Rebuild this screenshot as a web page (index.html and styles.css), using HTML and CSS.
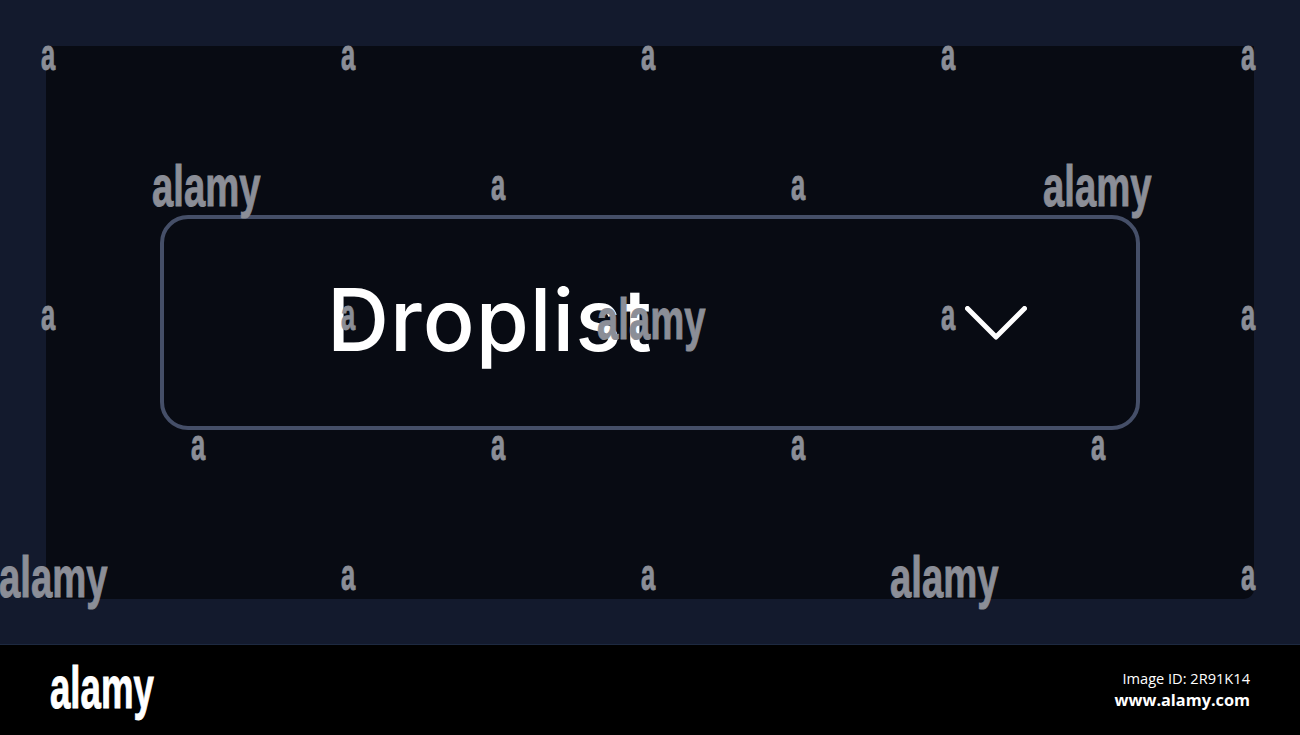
FILE: index.html
```html
<!DOCTYPE html>
<html>
<head>
<meta charset="utf-8">
<link rel="stylesheet" href="styles.css">
</head>
<body>
<div class="page">
  <div class="frame">
    <div class="panel">
      <div class="droplist">
        <span class="label">Droplist</span>
        <svg class="chevron" width="62" height="34" viewBox="0 0 62 34">
          <polyline points="2.5,2.5 31,31 59.5,2.5" fill="none" stroke="#ffffff" stroke-width="5" stroke-linecap="round" stroke-linejoin="round"/>
        </svg>
      </div>
    </div>
  </div>
  <div class="footer">
    <span class="logo">alamy</span>
    <div class="meta">
      <span class="id">Image ID: 2R91K14</span>
      <span class="site">www.alamy.com</span>
    </div>
  </div>
  <div class="marks">
    <span class="wm a" style="left:41px;top:33px">a</span>
    <span class="wm a" style="left:341px;top:33px">a</span>
    <span class="wm a" style="left:641px;top:33px">a</span>
    <span class="wm a" style="left:941px;top:33px">a</span>
    <span class="wm a" style="left:1241px;top:33px">a</span>
    <span class="wm big" style="left:152px;top:157px">alamy</span>
    <span class="wm a" style="left:491px;top:163px">a</span>
    <span class="wm a" style="left:791px;top:163px">a</span>
    <span class="wm big" style="left:1043px;top:157px">alamy</span>
    <span class="wm a" style="left:41px;top:293px">a</span>
    <span class="wm a" style="left:341px;top:293px">a</span>
    <span class="wm big" style="left:597px;top:290px">alamy</span>
    <span class="wm a" style="left:941px;top:293px">a</span>
    <span class="wm a" style="left:1241px;top:293px">a</span>
    <span class="wm a" style="left:191px;top:423px">a</span>
    <span class="wm a" style="left:491px;top:423px">a</span>
    <span class="wm a" style="left:791px;top:423px">a</span>
    <span class="wm a" style="left:1091px;top:423px">a</span>
    <span class="wm big" style="left:-1px;top:548px">alamy</span>
    <span class="wm a" style="left:341px;top:553px">a</span>
    <span class="wm a" style="left:641px;top:553px">a</span>
    <span class="wm big" style="left:890px;top:548px">alamy</span>
    <span class="wm a" style="left:1241px;top:553px">a</span>
  </div>
</div>
</body>
</html>
```
FILE: styles.css
```css
html, body {
  margin: 0;
  padding: 0;
  background: #000;
}
.page {
  position: relative;
  width: 1300px;
  height: 735px;
  overflow: hidden;
}
.frame {
  height: 645px;
  box-sizing: border-box;
  background: #131a2d;
  padding: 46px 46px 46px 46px;
  border-bottom: 1px solid #1d2940;
}
.panel {
  height: 553px;
  background: #080b13;
  border-radius: 0 0 10px 0;
  box-sizing: border-box;
  padding: 169px 114px 0 114px;
}
.droplist {
  height: 215px;
  box-sizing: border-box;
  border: 4px solid #454f68;
  border-radius: 28px;
  display: flex;
  align-items: center;
  padding: 0 109px 0 163px;
}
.label {
  flex: 1;
  color: #ffffff;
  font-family: "Inter", "Noto Sans", sans-serif;
  font-weight: 500;
  font-size: 86px;
  letter-spacing: 1px;
  line-height: 1;
  margin-top: -6px;
}
.chevron {
  display: block;
}
.footer {
  height: 89px;
  background: #000;
  display: flex;
  align-items: center;
  justify-content: space-between;
  padding: 0 50px 0 50px;
}
.logo {
  display: block;
  color: #fff;
  font-family: "Liberation Sans", "Arial", sans-serif;
  font-weight: 700;
  font-size: 60px;
  line-height: 1;
  width: 102px;
  transform: scaleX(0.61);
  transform-origin: left center;
  white-space: nowrap;
  margin-top: -4px;
  -webkit-text-stroke: 1px #fff;
}
.meta {
  display: flex;
  flex-direction: column;
  align-items: flex-end;
  gap: 4px;
  font-family: "Open Sans", "Noto Sans", sans-serif;
  color: #fff;
  margin-top: -2px;
}
.id {
  font-size: 14.6px;
  line-height: 18px;
}
.site {
  font-size: 16.3px;
  font-weight: 700;
  line-height: 18px;
}
.marks {
  position: absolute;
  inset: 0;
  pointer-events: none;
}
.wm {
  position: absolute;
  color: #8b8e97;
  font-family: "Liberation Sans", "Arial", sans-serif;
  font-weight: 700;
  line-height: 1;
  transform-origin: left top;
  white-space: nowrap;
  -webkit-text-stroke: 1px #8b8e97;
}
.wm.a {
  font-size: 44px;
  transform: scaleX(0.58);
}
.wm.big {
  font-size: 58px;
  transform: scaleX(0.66);
}
```
